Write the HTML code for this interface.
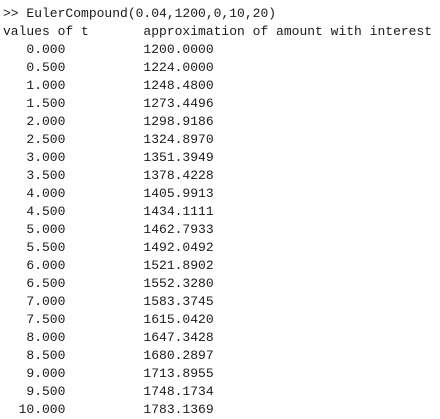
<!DOCTYPE html>
<html><head><meta charset="utf-8"><style>
html,body{margin:0;padding:0;background:#fff;width:440px;height:419px;overflow:hidden}
pre{margin:0;position:absolute;left:3px;top:5px;font-family:"Liberation Mono",monospace;font-size:13px;line-height:18px;color:#1a1a1a}
</style></head><body><pre>&gt;&gt; EulerCompound(0.04,1200,0,10,20)
values of t       approximation of amount with interest
   0.000          1200.0000
   0.500          1224.0000
   1.000          1248.4800
   1.500          1273.4496
   2.000          1298.9186
   2.500          1324.8970
   3.000          1351.3949
   3.500          1378.4228
   4.000          1405.9913
   4.500          1434.1111
   5.000          1462.7933
   5.500          1492.0492
   6.000          1521.8902
   6.500          1552.3280
   7.000          1583.3745
   7.500          1615.0420
   8.000          1647.3428
   8.500          1680.2897
   9.000          1713.8955
   9.500          1748.1734
  10.000          1783.1369</pre></body></html>
